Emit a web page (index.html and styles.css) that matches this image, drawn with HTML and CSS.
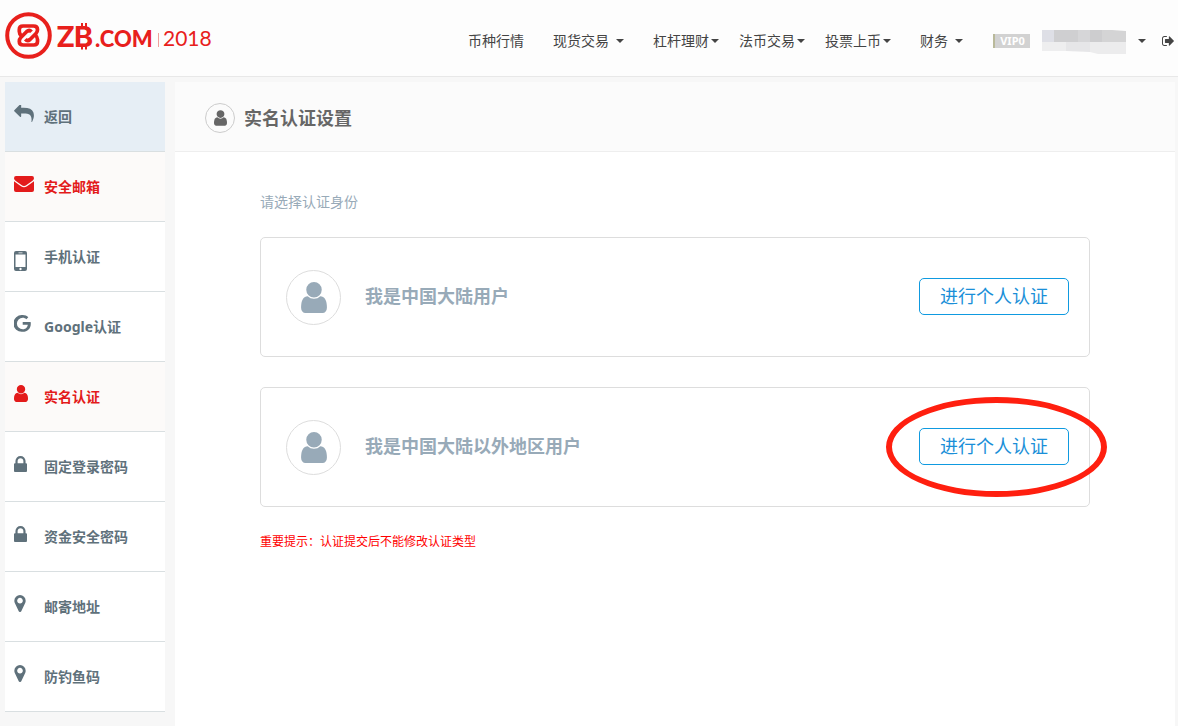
FILE: index.html
```html
<!DOCTYPE html>
<html lang="zh-CN">
<head>
<meta charset="utf-8">
<title>实名认证设置</title>
<link rel="stylesheet" href="styles.css">
</head>
<body>
<svg class="sprite" aria-hidden="true">
  <symbol id="user" viewBox="256 128 1280 1536"><path d="M1536 1399q0 109-62.5 187t-150.5 78h-854q-88 0-150.5-78t-62.5-187q0-85 8.5-160.5t31.5-152 58.5-131 94-89 134.5-34.5q131 128 313 128t313-128q76 0 134.5 34.5t94 89 58.5 131 31.5 152 8.5 160.5zm-256-887q0 159-112.5 271.5t-271.5 112.5-271.5-112.5-112.5-271.5 112.5-271.5 271.5-112.5 271.5 112.5 112.5 271.5z"/></symbol>
  <symbol id="lock" viewBox="320 128 1152 1408"><path d="M640 768h512v-192q0-106-75-181t-181-75-181 75-75 181v192zm832 96v576q0 40-28 68t-68 28h-960q-40 0-68-28t-28-68v-576q0-40 28-68t68-28h32v-192q0-184 132-316t316-132 316 132 132 316v192h32q40 0 68 28t28 68z"/></symbol>
  <symbol id="marker" viewBox="384 128 1024 1536"><path d="M1152 640q0-106-75-181t-181-75-181 75-75 181 75 181 181 75 181-75 75-181zm256 0q0 109-33 179l-364 774q-16 33-47.5 52t-67.5 19-67.5-19-46.5-52l-365-774q-33-70-33-179 0-212 150-362t362-150 362 150 150 362z"/></symbol>
  <symbol id="reply" viewBox="0 128 1792 1536"><path transform="matrix(-1 0 0 1 1792 0)" d="M1792 640q0 26-19 45l-512 512q-19 19-45 19t-45-19-19-45v-256h-224q-98 0-175.5 6t-154 21.5-133 42.5-105.5 69.5-80 101-48.5 138.5-17.5 181q0 55 5 123 0 6 2.5 23.5t2.5 26.5q0 15-8.5 25t-23.5 10q-16 0-28-17-7-9-13-22t-13.5-30-10.5-24q-127-285-127-451 0-199 53-333 162-403 875-403h224v-256q0-26 19-45t45-19 45 19l512 512q19 19 19 45z"/></symbol>
  <symbol id="signout" viewBox="64 256 1568 1280"><path d="M704 1440q0 4 1 20t.5 26.5-3 23.5-10 19.5-20.5 6.5h-320q-119 0-203.5-84.5t-84.5-203.5v-704q0-119 84.5-203.5t203.5-84.5h320q13 0 22.5 9.5t9.5 22.5q0 4 1 20t.5 26.5-3 23.5-10 19.5-20.5 6.5h-320q-66 0-113 47t-47 113v704q0 66 47 113t113 47h312l11.5 1 11.5 3 8 5.5 7 9 2 13.5zm928-544q0 26-19 45l-544 544q-19 19-45 19t-45-19-19-45v-288h-448q-26 0-45-19t-19-45v-384q0-26 19-45t45-19h448v-288q0-26 19-45t45-19 45 19l544 544q19 19 19 45z"/></symbol>
  <symbol id="mail" viewBox="0 0 20 16"><path d="M0 2.200Q0 0 2 0h16q2 0 2 2.200Q20 3.500 18.500 4.700L12.500 9Q10 10.800 7.500 9L1.500 4.700Q0 3.500 0 2.200zM0 5.300L7 10.300Q10 12.300 13 10.300L20 5.300V14q0 2-2 2H2q-2 0-2-2z"/></symbol>
  <symbol id="phone" viewBox="0 0 13 20"><path fill-rule="evenodd" d="M2 0h9q2 0 2 2v16q0 2-2 2H2q-2 0-2-2V2q0-2 2-2zM1.500 3.500v12.500h10V3.500zM4.500 1.400v.8h4v-.8zM6.500 16.800a1.200 1.200 0 1 0 .01 0z"/></symbol>
  <symbol id="google" viewBox="0 0 17 17"><path d="M8.700 7h7.900q.2.700.2 1.700c0 4.700-3.200 8.100-8.100 8.100a8.400 8.400 0 1 1 0-16.700c2.300 0 4.200.8 5.600 2.200L12.300 4.200C11.300 3.200 10.200 2.700 8.700 2.700a5.800 5.800 0 0 0 0 11.600c3.500 0 4.900-2.400 5.100-4.500H8.700z"/></symbol>
</svg>

<header class="topbar">
  <a class="logo" href="#" aria-label="ZB.COM 2018">
    <svg class="logo-art" viewBox="0 0 210 50">
      <circle cx="23.500" cy="25.500" r="21.300" fill="none" stroke="#e8201c" stroke-width="4"/>
      <g fill="none" stroke="#e8201c" stroke-width="3.700" stroke-linejoin="round">
        <path d="M16.500 26Q14.300 24 14.300 21.500V19.500Q14.300 16 18 16H28.500Q32.500 16 32.500 19.500Q32.500 22 31 23.500L25 29.500Q22.500 31.700 20.300 29.300"/>
        <path d="M30.300 25Q32.500 27 32.500 29.500V31.500Q32.500 35 28.800 35H18.300Q14.300 35 14.300 31.500Q14.300 29 15.800 27.500L21.800 21.500Q24.300 19.300 26.500 21.700"/>
      </g>
      <text class="logo-zb" y="37"><tspan x="51">Z</tspan><tspan x="69">B</tspan></text>
      <path d="M77 13v4M81 13v4M77 36v3.500M81 36v3.500" stroke="#e8201c" stroke-width="2"/>
      <text class="logo-com" x="90" y="37">.COM</text>
      <path d="M153.500 23v14" stroke="#f0a09c"/>
      <text class="logo-year" x="158" y="36">2018</text>
    </svg>
  </a>
  <nav class="nav">
    <a href="#">币种行情</a>
    <a class="spaced" href="#">现货交易<i class="caret"></i></a>
    <div class="nav-group">
      <a href="#">杠杆理财<i class="caret"></i></a>
      <a href="#">法币交易<i class="caret"></i></a>
      <a href="#">投票上币<i class="caret"></i></a>
    </div>
    <a class="spaced" href="#">财务<i class="caret"></i></a>
    <div class="account">
      <span class="vip">VIP0</span>
      <button class="account-menu" type="button" aria-label="账户">
        <svg class="masked" viewBox="0 0 86 26">
          <path fill="#dedfe6" d="M0 2h12v12H0z"/><path fill="#cfcfd1" d="M12 2h24v12H12z"/><path fill="#d6d6d8" d="M36 2h12v12H36z"/><path fill="#cdcdcf" d="M48 2h12v12H48z"/><path fill="#d4d4d5" d="M60 2h10l14 1v11H60z"/>
          <path fill="#eeeeef" d="M0 14h24v9H0z"/><path fill="#e6e6e8" d="M24 14h24v10l-24-1z"/><path fill="#ececed" d="M48 14h36v12H56l-8-2z"/>
        </svg>
        <i class="caret"></i>
      </button>
      <a class="signout" href="#" aria-label="退出"><svg class="i-signout"><use href="#signout"/></svg></a>
    </div>
  </nav>
</header>

<div class="layout">
  <aside class="sidebar">
    <a class="item back" href="#"><span class="icon"><svg class="i-reply"><use href="#reply"/></svg></span>返回</a>
    <a class="item active" href="#"><span class="icon"><svg class="i-mail"><use href="#mail"/></svg></span>安全邮箱</a>
    <a class="item" href="#"><span class="icon low"><svg class="i-phone"><use href="#phone"/></svg></span>手机认证</a>
    <a class="item" href="#"><span class="icon"><svg class="i-google"><use href="#google"/></svg></span>Google认证</a>
    <a class="item active" href="#"><span class="icon"><svg class="i-user"><use href="#user"/></svg></span>实名认证</a>
    <a class="item" href="#"><span class="icon"><svg class="i-lock"><use href="#lock"/></svg></span>固定登录密码</a>
    <a class="item" href="#"><span class="icon"><svg class="i-lock"><use href="#lock"/></svg></span>资金安全密码</a>
    <a class="item" href="#"><span class="icon"><svg class="i-marker"><use href="#marker"/></svg></span>邮寄地址</a>
    <a class="item" href="#"><span class="icon"><svg class="i-marker"><use href="#marker"/></svg></span>防钓鱼码</a>
  </aside>
  <main class="main">
    <div class="main-head">
      <span class="round"><svg class="i-head"><use href="#user"/></svg></span>
      <h1>实名认证设置</h1>
    </div>
    <div class="content">
      <p class="lead">请选择认证身份</p>
      <section class="card">
        <span class="avatar"><svg class="i-avatar"><use href="#user"/></svg></span>
        <h2>我是中国大陆用户</h2>
        <div class="action"><button class="verify" type="button">进行个人认证</button></div>
      </section>
      <section class="card">
        <span class="avatar"><svg class="i-avatar"><use href="#user"/></svg></span>
        <h2>我是中国大陆以外地区用户</h2>
        <div class="action"><button class="verify" type="button">进行个人认证</button><span class="ring"></span></div>
      </section>
      <p class="warning">重要提示：认证提交后不能修改认证类型</p>
    </div>
  </main>
</div>
</body>
</html>
```
FILE: styles.css
```css
* { box-sizing: border-box; }
body {
  margin: 0;
  min-height: 100vh;
  display: flex;
  flex-direction: column;
  background: #f7f7f7;
  color: #444;
  font: 14px/20px "Noto Sans", "Noto Sans CJK SC", sans-serif;
}
a { color: inherit; text-decoration: none; }
h1, h2, p { margin: 0; }
svg { display: block; fill: currentColor; }
button { font: inherit; color: inherit; cursor: pointer; }
.sprite { position: absolute; width: 0; height: 0; }

.topbar {
  display: flex;
  justify-content: space-between;
  height: 77px;
  padding: 0 4px 0 5px;
  background: #fdfdfd;
  border-bottom: 1px solid #e8e8e8;
}
.logo { padding-top: 10px; }
.logo-art { width: 210px; height: 50px; fill: #e8201c; }
.logo-zb { font: 700 29px Inter, sans-serif; }
.logo-com { font: 900 22px Lato, sans-serif; }
.logo-year { font: 400 21px Lato, sans-serif; }

.nav { display: flex; align-items: center; gap: 29px; padding-top: 6px; }
.nav a { display: flex; align-items: center; gap: 2px; }
.nav a.spaced { gap: 7px; }
.nav-group { display: flex; gap: 20px; }
.caret {
  width: 8px;
  border: 4px solid transparent;
  border-top-color: #444;
  border-bottom: 0;
}
.account { display: flex; align-items: center; margin-left: 1px; }
.vip {
  width: 37px;
  margin-right: 12px;
  border-left: 2px solid #b9b99a;
  background: #d2d2d2;
  color: #fff;
  font-size: 11px;
  font-weight: 700;
  line-height: 14px;
  text-align: center;
}
.account-menu {
  display: flex;
  align-items: center;
  gap: 10px;
  margin-right: 16px;
  padding: 0;
  border: 0;
  background: none;
}
.masked { width: 86px; height: 26px; }
.i-signout { width: 12px; height: 10px; }

.layout { flex: 1; display: flex; gap: 10px; padding: 5px 3px 0 5px; }
.sidebar { width: 160px; }
.item {
  display: flex;
  align-items: center;
  height: 70px;
  padding-left: 9px;
  border-bottom: 1px solid #d9dfe1;
  background: #fff;
  color: #5f717b;
  font-weight: 700;
}
.item.back { background: #e6eef5; }
.item.active { background: #fcfaf9; color: #e31b1b; }
.icon { width: 30px; padding-bottom: 6px; }
.icon.low { padding: 8px 0 0; }
.i-reply { width: 20px; height: 17px; }
.i-mail { width: 20px; height: 16px; }
.i-phone { width: 13px; height: 20px; }
.i-google { width: 17px; height: 17px; }
.i-user { width: 14px; height: 17px; }
.i-lock { width: 13px; height: 16px; }
.i-marker { width: 12px; height: 17px; }

.main { flex: 1; background: #fff; }
.main-head {
  display: flex;
  align-items: center;
  gap: 9px;
  height: 70px;
  padding: 2px 30px 0;
  border-bottom: 1px solid #eee;
  background: #fbfbfb;
  color: #666;
}
.main-head h1 { font-size: 18px; line-height: 26px; }
.round, .avatar {
  display: grid;
  place-items: center;
  border: 1px solid #ddd;
  border-radius: 50%;
}
.round { width: 30px; height: 30px; border-color: #ccc; }
.i-head { width: 13px; height: 16px; }

.content { padding: 40px 85px; }
.lead { margin-bottom: 25px; color: #98aab8; }
.card {
  display: flex;
  align-items: center;
  height: 120px;
  margin-bottom: 30px;
  padding: 0 20px 0 25px;
  border: 1px solid #ddd;
  border-radius: 5px;
}
.card:last-of-type { margin-bottom: 26px; }
.avatar { width: 55px; height: 55px; color: #98aab8; }
.i-avatar { width: 26px; height: 31px; }
.card h2 {
  flex: 1;
  margin-left: 24px;
  padding-bottom: 2px;
  color: #98aab8;
  font-size: 18px;
  line-height: 26px;
}
.action { position: relative; padding-bottom: 2px; }
.verify {
  display: block;
  width: 150px;
  height: 37px;
  padding: 0;
  border: 1px solid #0f9ae0;
  border-radius: 5px;
  background: #fff;
  color: #1a8fd8;
  font-size: 18px;
  line-height: 34px;
}
.ring {
  position: absolute;
  inset: -31px -38px -30px -33px;
  border: 6px solid #ff1f0f;
  border-radius: 50%;
  pointer-events: none;
}
.warning { color: #f00; font-size: 12px; line-height: 18px; }
```
